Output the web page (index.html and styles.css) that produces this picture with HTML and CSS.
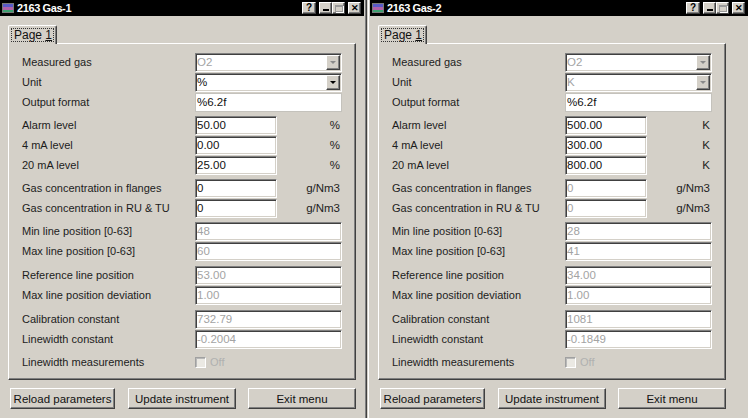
FILE: index.html
```html
<!DOCTYPE html>
<html>
<head>
<meta charset="utf-8">
<link rel="stylesheet" href="styles.css">
<title>2163 Gas</title>
</head>
<body>
<div class="win win-1">
  <div class="titlebar">
    <svg class="ticon" width="12" height="10" viewBox="0 0 12 10"><rect x="0.5" y="0.5" width="11" height="9" fill="#b8b8b8" stroke="#7a7a7a"/><rect x="1" y="1" width="10" height="3" fill="#5a5ac8"/><rect x="1" y="4" width="10" height="3" fill="#b060a8"/><rect x="1" y="7" width="10" height="2" fill="#3ca070"/></svg>
    <span class="ttext">2163 Gas-1</span>
    <span class="tbtns">
      <span class="tb tb-help">?</span>
      <span class="tb tb-min"><i class="minbar"></i></span>
      <span class="tb tb-max"><i class="maxbox"></i></span>
      <span class="tb tb-close">✕</span>
    </span>
  </div>
  <div class="tabs"><div class="tab"><span class="focus">Page <u>1</u></span></div></div>
  <div class="panel">
    <div class="group">
      <div class="row"><span class="lbl">Measured gas</span><div class="field combo dis"><span class="val">O2</span><span class="cbtn"><i class="arrow"></i></span></div></div>
      <div class="row"><span class="lbl">Unit</span><div class="field combo"><span class="val">%</span><span class="cbtn"><i class="arrow"></i></span></div></div>
      <div class="row"><span class="lbl">Output format</span><div class="field flat"><span class="val">%6.2f</span></div></div>
    </div>
    <div class="group">
      <div class="row"><span class="lbl">Alarm level</span><div class="pair"><div class="field short"><span class="val">50.00</span></div><span class="unit">%</span></div></div>
      <div class="row"><span class="lbl">4 mA level</span><div class="pair"><div class="field short"><span class="val">0.00</span></div><span class="unit">%</span></div></div>
      <div class="row"><span class="lbl">20 mA level</span><div class="pair"><div class="field short"><span class="val">25.00</span></div><span class="unit">%</span></div></div>
    </div>
    <div class="group">
      <div class="row"><span class="lbl">Gas concentration in flanges</span><div class="pair"><div class="field short"><span class="val">0</span></div><span class="unit">g/Nm3</span></div></div>
      <div class="row"><span class="lbl">Gas concentration in RU &amp; TU</span><div class="pair"><div class="field short"><span class="val">0</span></div><span class="unit">g/Nm3</span></div></div>
    </div>
    <div class="group g4">
      <div class="row"><span class="lbl">Min line position [0-63]</span><div class="field dis"><span class="val">48</span></div></div>
      <div class="row"><span class="lbl">Max line position [0-63]</span><div class="field dis"><span class="val">60</span></div></div>
    </div>
    <div class="group g4">
      <div class="row"><span class="lbl">Reference line position</span><div class="field dis"><span class="val">53.00</span></div></div>
      <div class="row"><span class="lbl">Max line position deviation</span><div class="field dis"><span class="val">1.00</span></div></div>
    </div>
    <div class="group">
      <div class="row"><span class="lbl">Calibration constant</span><div class="field dis"><span class="val">732.79</span></div></div>
      <div class="row"><span class="lbl">Linewidth constant</span><div class="field dis"><span class="val">-0.2004</span></div></div>
    </div>
    <div class="group">
      <div class="row"><span class="lbl">Linewidth measurements</span><span class="chk"><i class="box"></i><span class="off">Off</span></span></div>
    </div>
  </div>
  <div class="buttons">
    <span class="btn b1">Reload parameters</span>
    <span class="btn b2">Update instrument</span>
    <span class="btn b3">Exit menu</span>
  </div>
</div>

<div class="win win-2">
  <div class="titlebar">
    <svg class="ticon" width="12" height="10" viewBox="0 0 12 10"><rect x="0.5" y="0.5" width="11" height="9" fill="#b8b8b8" stroke="#7a7a7a"/><rect x="1" y="1" width="10" height="3" fill="#5a5ac8"/><rect x="1" y="4" width="10" height="3" fill="#b060a8"/><rect x="1" y="7" width="10" height="2" fill="#3ca070"/></svg>
    <span class="ttext">2163 Gas-2</span>
    <span class="tbtns">
      <span class="tb tb-help">?</span>
      <span class="tb tb-min"><i class="minbar"></i></span>
      <span class="tb tb-max"><i class="maxbox"></i></span>
      <span class="tb tb-close">✕</span>
    </span>
  </div>
  <div class="tabs"><div class="tab"><span class="focus">Page <u>1</u></span></div></div>
  <div class="panel">
    <div class="group">
      <div class="row"><span class="lbl">Measured gas</span><div class="field combo dis"><span class="val">O2</span><span class="cbtn"><i class="arrow"></i></span></div></div>
      <div class="row"><span class="lbl">Unit</span><div class="field combo dis"><span class="val">K</span><span class="cbtn"><i class="arrow"></i></span></div></div>
      <div class="row"><span class="lbl">Output format</span><div class="field flat"><span class="val">%6.2f</span></div></div>
    </div>
    <div class="group">
      <div class="row"><span class="lbl">Alarm level</span><div class="pair"><div class="field short"><span class="val">500.00</span></div><span class="unit">K</span></div></div>
      <div class="row"><span class="lbl">4 mA level</span><div class="pair"><div class="field short"><span class="val">300.00</span></div><span class="unit">K</span></div></div>
      <div class="row"><span class="lbl">20 mA level</span><div class="pair"><div class="field short"><span class="val">800.00</span></div><span class="unit">K</span></div></div>
    </div>
    <div class="group">
      <div class="row"><span class="lbl">Gas concentration in flanges</span><div class="pair"><div class="field short dis"><span class="val">0</span></div><span class="unit">g/Nm3</span></div></div>
      <div class="row"><span class="lbl">Gas concentration in RU &amp; TU</span><div class="pair"><div class="field short dis"><span class="val">0</span></div><span class="unit">g/Nm3</span></div></div>
    </div>
    <div class="group g4">
      <div class="row"><span class="lbl">Min line position [0-63]</span><div class="field dis"><span class="val">28</span></div></div>
      <div class="row"><span class="lbl">Max line position [0-63]</span><div class="field dis"><span class="val">41</span></div></div>
    </div>
    <div class="group g4">
      <div class="row"><span class="lbl">Reference line position</span><div class="field dis"><span class="val">34.00</span></div></div>
      <div class="row"><span class="lbl">Max line position deviation</span><div class="field dis"><span class="val">1.00</span></div></div>
    </div>
    <div class="group">
      <div class="row"><span class="lbl">Calibration constant</span><div class="field dis"><span class="val">1081</span></div></div>
      <div class="row"><span class="lbl">Linewidth constant</span><div class="field dis"><span class="val">-0.1849</span></div></div>
    </div>
    <div class="group">
      <div class="row"><span class="lbl">Linewidth measurements</span><span class="chk"><i class="box"></i><span class="off">Off</span></span></div>
    </div>
  </div>
  <div class="buttons">
    <span class="btn b1">Reload parameters</span>
    <span class="btn b2">Update instrument</span>
    <span class="btn b3">Exit menu</span>
  </div>
</div>
</body>
</html>
```

FILE: styles.css
```css
* { box-sizing: border-box; }
html, body { margin: 0; padding: 0; }
body {
  width: 748px;
  height: 418px;
  overflow: hidden;
  background: #d4d0c8;
  font: 11px "Liberation Sans", Arial, sans-serif;
  color: #111;
  display: flex;
}
.win {
  height: 418px;
  display: flex;
  flex-direction: column;
}
.win-1 {
  width: 367px;
  border-right: 1px solid #404040;
  box-shadow: inset -1px 0 #808080;
}
.win-2 {
  flex: 1;
  margin-left: 1px;
  border-left: 1px solid #ffffff;
  padding-left: 1px;
}
.titlebar {
  height: 16px;
  background: #000;
  display: flex;
  align-items: center;
  color: #fff;
  margin-right: 2px;
}
.win-2 .titlebar { margin-right: 0; }
.ticon { margin: 0 3px 0 2px; flex: none; }
.ttext {
  font-weight: bold;
  font-size: 11px;
  letter-spacing: -0.4px;
  flex: 1;
}
.tbtns { display: flex; align-items: center; margin-right: 3px; }
.tb {
  width: 13px;
  height: 12px;
  background: #d4d0c8;
  border-top: 1px solid #fff;
  border-left: 1px solid #fff;
  border-right: 1px solid #404040;
  border-bottom: 1px solid #404040;
  box-shadow: inset -1px -1px #808080;
  color: #000;
  display: flex;
  align-items: center;
  justify-content: center;
  font-weight: bold;
  font-size: 10px;
  line-height: 1;
  position: relative;
}
.tb-help { width: 14px; margin-right: 3px; }
.tb-close { margin-left: 3px; font-size: 9px; }
.minbar {
  position: absolute;
  left: 3px;
  bottom: 2px;
  width: 6px;
  height: 2px;
  background: #000;
}
.maxbox {
  width: 8px;
  height: 7px;
  border: 1px solid #9a9a9a;
  border-top-width: 2px;
  box-shadow: 1px 1px #fff;
}
.tabs {
  height: 27px;
  padding: 9px 0 0 8px;
  display: flex;
}
.tab {
  width: 49px;
  height: 19px;
  border-top: 1px solid #fff;
  border-left: 1px solid #fff;
  border-right: 1px solid #404040;
  box-shadow: inset -1px 0 #808080;
  border-radius: 2px 2px 0 0;
  padding: 2px 2px 0 2px;
  position: relative;
  z-index: 1;
  background: #d4d0c8;
  margin-bottom: -1px;
}
.focus {
  display: block;
  height: 14px;
  border: 1px dotted #333;
  font-size: 12px;
  line-height: 12px;
  padding-left: 2px;
  color: #111;
}
.focus u { text-underline-offset: 1px; }
.panel {
  width: 348px;
  height: 337px;
  margin-left: 8px;
  border-top: 1px solid #fff;
  border-left: 1px solid #fff;
  border-right: 1px solid #404040;
  border-bottom: 1px solid #404040;
  box-shadow: inset -1px -1px #808080;
  padding: 8px 0 0 13px;
}
.group { margin-bottom: 3px; }
.group.g4 { margin-bottom: 4px; }
.row {
  height: 20px;
  display: flex;
  align-items: center;
}
.lbl {
  width: 173px;
  flex: none;
  font-size: 11px;
  color: #1c1c1c;
}
.field {
  width: 147px;
  height: 19px;
  background: #fff;
  border-top: 1px solid #808080;
  border-left: 1px solid #808080;
  border-right: 1px solid #fff;
  border-bottom: 1px solid #fff;
  box-shadow: inset 1px 1px #404040, inset -1px -1px #d4d0c8;
  display: flex;
  align-items: center;
  padding-left: 1px;
  position: relative;
  font-size: 11.5px;
  color: #111;
}
.field.dis .val { color: #a3a3a3; }
.field.flat {
  border: 1px solid #c4c2bc;
  box-shadow: none;
  padding-left: 1px;
}
.combo .cbtn {
  position: absolute;
  right: 1px;
  top: 1px;
  width: 14px;
  height: 15px;
  background: #d4d0c8;
  border-top: 1px solid #fff;
  border-left: 1px solid #fff;
  border-right: 1px solid #404040;
  border-bottom: 1px solid #404040;
  box-shadow: inset -1px -1px #808080;
  display: flex;
  align-items: center;
  justify-content: center;
}
.arrow {
  width: 0;
  height: 0;
  border-left: 3px solid transparent;
  border-right: 3px solid transparent;
  border-top: 3px solid #000;
}
.combo.dis .arrow { border-top-color: #8a8a8a; }
.pair {
  width: 145px;
  display: flex;
  align-items: center;
}
.field.short { width: 82px; flex: none; }
.unit {
  flex: 1;
  text-align: right;
  font-size: 11.5px;
  color: #222;
}
.chk { display: flex; align-items: center; }
.box {
  width: 11px;
  height: 11px;
  background: #ebe9e3;
  border-top: 1px solid #a0a0a0;
  border-left: 1px solid #a0a0a0;
  border-right: 1px solid #fff;
  border-bottom: 1px solid #fff;
  box-shadow: inset 1px 1px #b8b8b8;
  margin-right: 4px;
}
.off { color: #b0b0b0; font-size: 11px; }
.buttons {
  display: flex;
  margin: 8px 0 0 10px;
}
.btn {
  height: 21px;
  display: flex;
  align-items: center;
  justify-content: center;
  background: #d4d0c8;
  border-top: 1px solid #fff;
  border-left: 1px solid #fff;
  border-right: 1px solid #404040;
  border-bottom: 1px solid #404040;
  box-shadow: inset -1px -1px #808080;
  font-size: 11.5px;
  color: #111;
}
.b1 { width: 105px; }
.b2 { width: 108px; margin-left: 13px; }
.b3 { width: 108px; margin-left: 12px; }
```
